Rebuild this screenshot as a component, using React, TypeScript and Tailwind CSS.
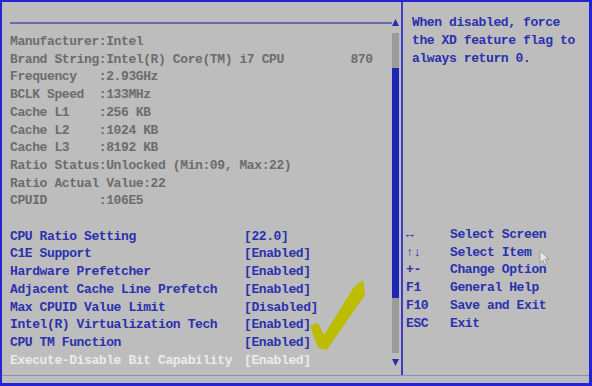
const info = [
  "Manufacturer:Intel",
  "Brand String:Intel(R) Core(TM) i7 CPU         870",
  "Frequency   :2.93GHz",
  "BCLK Speed  :133MHz",
  "Cache L1    :256 KB",
  "Cache L2    :1024 KB",
  "Cache L3    :8192 KB",
  "Ratio Status:Unlocked (Min:09, Max:22)",
  "Ratio Actual Value:22",
  "CPUID       :106E5",
];

const settings = [
  { label: "CPU Ratio Setting", value: "[22.0]" },
  { label: "C1E Support", value: "[Enabled]" },
  { label: "Hardware Prefetcher", value: "[Enabled]" },
  { label: "Adjacent Cache Line Prefetch", value: "[Enabled]" },
  { label: "Max CPUID Value Limit", value: "[Disabled]" },
  { label: "Intel(R) Virtualization Tech", value: "[Enabled]" },
  { label: "CPU TM Function", value: "[Enabled]" },
  { label: "Execute-Disable Bit Capability", value: "[Enabled]", active: true },
];

const keys = [
  { key: "↔", desc: "Select Screen" },
  { key: "↑↓", desc: "Select Item" },
  { key: "+-", desc: "Change Option" },
  { key: "F1", desc: "General Help" },
  { key: "F10", desc: "Save and Exit" },
  { key: "ESC", desc: "Exit" },
];

export default function App() {
  return (
    <div className="relative w-[592px] h-[386px] overflow-hidden bg-[#bdbdbd] border-[#2424d4] border-t-2 border-l-2 border-r-[3px] border-b-[3px] font-['Liberation_Mono','DejaVu_Sans_Mono',monospace] text-[13px] tracking-[-0.4px] leading-[17.7px] font-bold">
      <div className="flex h-[374px] border-b border-[#8c8cb4]">
        {/* Left: main settings page */}
        <div className="w-[399px] flex flex-col pl-[8px] pr-[2px]">
          <div className="flex items-center h-[7px] mt-[17px]">
            <div className="flex-1 h-[2px] bg-[#6a6aa8]" />
            <svg width="7" height="7" viewBox="0 0 7 7">
              <polygon points="3.5,0 7,7 0,7" fill="#2a2ab0" />
            </svg>
          </div>
          <div className="flex flex-1 mt-[7px]">
            <div className="flex-1 whitespace-pre">
              {info.map((l) => (
                <div key={l} className="text-[#6c6c6c]">{l}</div>
              ))}
              <div className="h-[17.7px]" />
              {settings.map((s) => (
                <div key={s.label} className={`flex ${s.active ? "text-[#ececec]" : "text-[#2a30ae]"}`}>
                  <span className="w-[234px]">{s.label}</span>
                  <span>{s.value}</span>
                </div>
              ))}
            </div>
            <div className="w-[7px] flex flex-col">
              <div className="h-[35px] bg-[#9b9b9b]" />
              <div className="h-[230px] bg-[#1e26b4]" />
              <div className="h-[55px] bg-[#9b9b9b]" />
              <svg width="7" height="7" viewBox="0 0 7 7" className="mt-[6px]">
                <polygon points="0,0 7,0 3.5,7" fill="#2a2ab0" />
              </svg>
            </div>
          </div>
        </div>

        {/* Divider */}
        <div className="w-[2px] bg-[#3c3cc4]" />

        {/* Right: help panel */}
        <div className="flex-1 flex flex-col text-[#2a30ae]">
          <div className="pl-[9px] pt-[12px] leading-[18px]">
            <div>When disabled, force</div>
            <div>the XD feature flag to</div>
            <div>always return 0.</div>
          </div>
          <div className="mt-[158px] pl-[3px]">
            {keys.map((k) => (
              <div key={k.key} className="flex">
                <span className="w-[44px]">{k.key}</span>
                <span>{k.desc}</span>
              </div>
            ))}
          </div>
        </div>
      </div>

      {/* Hand-drawn check mark */}
      <svg className="absolute left-0 top-0 pointer-events-none" width="592" height="386">
        <polygon
          points="308,324 316,321 322,333 352,285 361,278 363,293 331,339 325,348 316,346"
          fill="#bcbc00"
        />
        {/* mouse pointer */}
        <polygon points="538,249 538,261 541,258 543,263 545,262 543,257 547,257" fill="#e6e6e6" stroke="#8a8a8a" strokeWidth="0.7" />
      </svg>
    </div>
  );
}
